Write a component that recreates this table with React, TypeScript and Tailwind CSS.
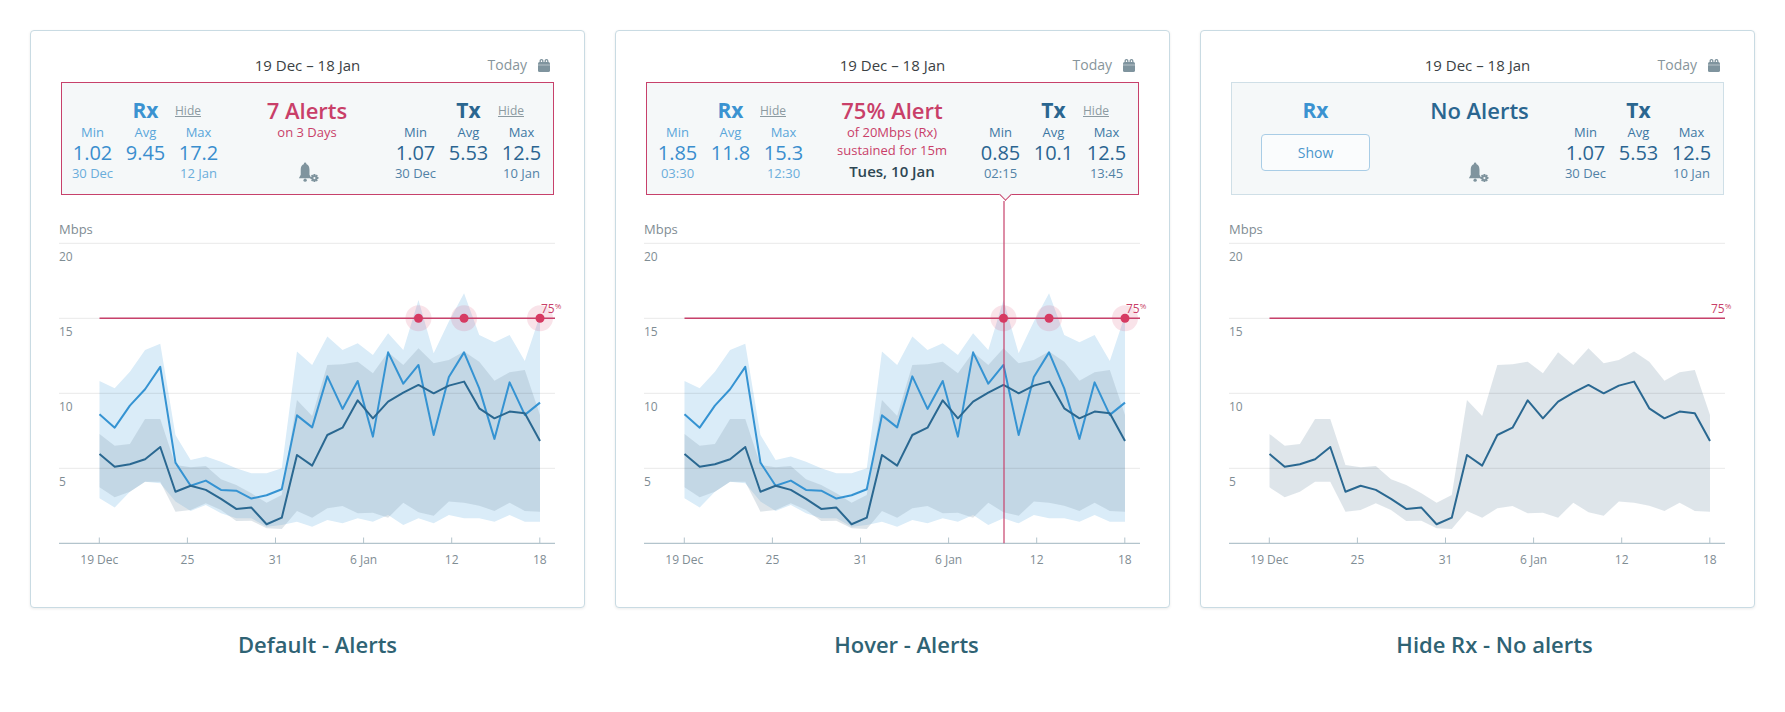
import React from "react";

const rxLine = [8.6, 7.71, 9.18, 10.27, 11.76, 5.38, 3.84, 4.18, 3.56, 3.51, 2.98, 3.2, 3.6, 8.53, 7.73, 11.13, 8.96, 10.82, 7.11, 12.73, 10.64, 11.89, 7.22, 11.09, 12.73, 10.33, 6.96, 10.73, 8.56, 9.38];
const txLine = [5.96, 5.11, 5.27, 5.6, 6.42, 3.44, 3.84, 3.56, 2.96, 2.29, 2.38, 1.27, 1.71, 5.89, 5.18, 7.22, 7.71, 9.53, 8.33, 9.44, 10.04, 10.56, 10.0, 10.51, 10.78, 9.0, 8.33, 8.78, 8.67, 6.82];
const rxMax = [10.82, 10.33, 11.44, 12.89, 13.31, 7.22, 5.56, 5.78, 5.44, 5.0, 4.67, 4.67, 5.0, 12.78, 11.89, 13.78, 12.89, 13.33, 12.56, 14.0, 12.89, 16.22, 12.67, 14.78, 16.67, 13.89, 13.4, 13.89, 12.16, 15.2];
const rxMin = [3.0, 2.38, 3.44, 4.11, 4.0, 2.78, 2.16, 2.56, 2.0, 1.67, 1.67, 1.11, 1.22, 1.44, 1.11, 1.56, 1.33, 1.67, 1.44, 1.89, 1.22, 1.67, 1.33, 1.89, 1.67, 1.67, 1.44, 1.89, 1.44, 1.44];
const txMax = [7.29, 6.51, 6.62, 8.29, 8.29, 5.22, 5.07, 5.16, 4.27, 3.89, 3.33, 2.71, 3.22, 9.56, 8.49, 11.89, 11.93, 12.11, 11.33, 12.73, 11.89, 13.0, 12.0, 12.22, 12.78, 12.11, 10.84, 11.4, 11.56, 8.56];
const txMin = [3.73, 3.07, 3.44, 4.11, 4.11, 2.11, 2.22, 2.67, 2.22, 1.49, 1.51, 1.0, 0.96, 2.16, 1.71, 2.33, 2.49, 2.0, 2.04, 1.71, 2.71, 2.07, 1.84, 2.78, 2.71, 2.51, 2.16, 2.71, 2.16, 2.11];

const X0 = 69.5;
const DX = 440.5 / 29;
const xi = (i: number) => X0 + i * DX;
const yv = (v: number) => 513.3 - v * 15;

const linePath = (d: number[]) =>
  d.map((v, i) => `${i === 0 ? "M" : "L"}${xi(i).toFixed(2)},${yv(v).toFixed(2)}`).join(" ");
const areaPath = (top: number[], bot: number[]) => {
  const a = top.map((v, i) => `${i === 0 ? "M" : "L"}${xi(i).toFixed(2)},${yv(v).toFixed(2)}`).join(" ");
  const b = bot
    .map((v, i) => ({ v, i }))
    .reverse()
    .map(({ v, i }) => `L${xi(i).toFixed(2)},${yv(v).toFixed(2)}`)
    .join(" ");
  return `${a} ${b} Z`;
};

const ticks = [
  { x: 69.3, t: "19 Dec" },
  { x: 157.4, t: "25" },
  { x: 245.5, t: "31" },
  { x: 333.6, t: "6 Jan" },
  { x: 421.7, t: "12" },
  { x: 509.8, t: "18" },
];

function Chart({ showRx, dots, hover }: { showRx: boolean; dots: boolean; hover: boolean }) {
  const grid = [20, 15, 10, 5];
  return (
    <svg width="553" height="412" viewBox="1 165 553 412" className="block">
      {showRx && <path d={areaPath(rxMax, rxMin)} fill="#daecf8" />}
      <path d={areaPath(txMax, txMin)} fill="#8aa3b5" fillOpacity={0.28} />
      <text x="29" y="203.5" fontSize="13" fill="#7f8d94">Mbps</text>
      {grid.map((g) => (
        <g key={g}>
          <line x1="29" x2="525" y1={yv(g)} y2={yv(g)} stroke="#000" strokeOpacity={0.09} strokeWidth="1" />
          <text x="29" y={yv(g) + 18} fontSize="12" fill="#7f8d94">{g}</text>
        </g>
      ))}
      <line x1="29" x2="525" y1="513.3" y2="513.3" stroke="#b3c4cc" strokeWidth="1.2" />
      {ticks.map((t) => (
        <g key={t.t}>
          <line x1={t.x} x2={t.x} y1="507.5" y2="513.3" stroke="#b3c4cc" strokeWidth="1" />
          <text x={t.x} y="533.5" fontSize="12" fill="#7f8d94" textAnchor="middle">{t.t}</text>
        </g>
      ))}
      <line x1={X0} x2="525" y1={yv(15)} y2={yv(15)} stroke="#c7416b" strokeWidth="1.5" />
      <text x="511" y="282.7" fontSize="12" fill="#c93f69">
        75<tspan fontSize="8" dy="-4">%</tspan>
      </text>
      {showRx && (
        <path d={linePath(rxLine)} fill="none" stroke="#3593d2" strokeWidth="2" strokeLinejoin="round" />
      )}
      <path d={linePath(txLine)} fill="none" stroke="#2a6891" strokeWidth="2" strokeLinejoin="round" />
      {hover && <line x1="389" x2="389" y1="171" y2="513.3" stroke="#c7416b" strokeWidth="1.2" />}
      {dots &&
        [21, 24, 29].map((i) => (
          <g key={i}>
            <circle cx={xi(i)} cy={yv(15)} r="13" fill="#d6406a" fillOpacity={0.15} />
            <circle cx={xi(i)} cy={yv(15)} r="4.5" fill="#d63a62" />
          </g>
        ))}
    </svg>
  );
}

function CalendarIcon() {
  return (
    <svg width="12" height="13" viewBox="0 0 12 13">
      <rect x="0" y="3" width="12" height="10" rx="1.6" fill="#7f949e" />
      <rect x="2.2" y="0.7" width="2.6" height="3.6" rx="1.2" fill="none" stroke="#7f949e" strokeWidth="1.3" />
      <rect x="7.2" y="0.7" width="2.6" height="3.6" rx="1.2" fill="none" stroke="#7f949e" strokeWidth="1.3" />
      <rect x="0" y="5.6" width="12" height="0.8" fill="#ffffff" fillOpacity={0.55} />
    </svg>
  );
}

function BellIcon() {
  return (
    <svg width="23" height="22" viewBox="0 0 21 20">
      <circle cx="6.5" cy="1.6" r="1.1" fill="#7f949e" />
      <path d="M6.5 1.8c-2.8 0-4 2.4-4 5.3v4.4L0.8 14.8h11.4l-1.7-3.3V7.1c0-2.9-1.2-5.3-4-5.3z" fill="#7f949e" />
      <circle cx="6.5" cy="16.6" r="1.5" fill="#7f949e" />
      <g transform="translate(15 14.6)">
        {[0, 45, 90, 135].map((a) => (
          <rect key={a} x="-0.9" y="-3.7" width="1.8" height="7.4" rx="0.4" fill="#7f949e" transform={`rotate(${a})`} />
        ))}
        <circle r="2.6" fill="#7f949e" />
        <circle r="1" fill="#f5f8f9" />
      </g>
    </svg>
  );
}

type Scheme = { title: string; label: string; value: string; sub: string };
const RX: Scheme = {
  title: "text-[#3b93d1]",
  label: "text-[#5aa6da]",
  value: "text-[#3a8ece]",
  sub: "text-[#6aaddb]",
};
const TX: Scheme = {
  title: "text-[#2a6690]",
  label: "text-[#3c77a3]",
  value: "text-[#2b6591]",
  sub: "text-[#5282a6]",
};

function Stats({
  name,
  c,
  hide,
  values,
  subs,
  children,
}: {
  name: string;
  c: Scheme;
  hide?: boolean;
  values?: string[];
  subs?: string[];
  children?: React.ReactNode;
}) {
  return (
    <div className="w-[159px] shrink-0">
      <div className="grid grid-cols-3 h-[26px]">
        <div />
        <div className={`text-center text-[21px] font-bold leading-[26px] ${c.title}`}>{name}</div>
        <div className="pl-[3px] text-[12px] leading-[28px] text-[#8c9aa1] underline">{hide ? "Hide" : ""}</div>
      </div>
      {values && subs && (
        <>
          <div className={`grid grid-cols-3 h-[19px] text-center text-[13px] leading-[19px] ${c.label}`}>
            <div>Min</div>
            <div>Avg</div>
            <div>Max</div>
          </div>
          <div className={`grid grid-cols-3 h-[22px] text-center text-[20px] leading-[22px] ${c.value}`}>
            {values.map((v, i) => (
              <div key={i}>{v}</div>
            ))}
          </div>
          <div className={`grid grid-cols-3 h-[18px] text-center text-[13px] leading-[18px] ${c.sub}`}>
            {subs.map((v, i) => (
              <div key={i}>{v}</div>
            ))}
          </div>
        </>
      )}
      {children}
    </div>
  );
}

function Card({ variant }: { variant: 1 | 2 | 3 }) {
  const alert = variant !== 3;
  const captionPad = variant === 1 ? "pl-[20px]" : variant === 2 ? "pl-[28px]" : "pl-[34px]";
  return (
    <div>
      <div className="w-[555px] h-[578px] border border-[#c9dbe3] rounded-[4px] bg-white shadow-[0_1px_3px_rgba(0,0,0,0.08)]">
        <div className="mt-[23px] h-[22px] grid grid-cols-[1fr_auto_1fr] items-center">
          <div />
          <div className="text-[15px] leading-[22px] text-[#3b4144]">19 Dec – 18 Jan</div>
          <div className="flex items-center justify-end pr-[34px] gap-[11px]">
            <span className="text-[14px] leading-[22px] text-[#87959b]">Today</span>
            <CalendarIcon />
          </div>
        </div>
        <div
          className={`relative mx-[30px] mt-[6px] h-[113px] border flex pt-[14px] pl-[4px] pr-[5px] bg-[#f5f8f9] ${
            alert ? "border-[#c7416b]" : "border-[#cfdfe7]"
          }`}
        >
          {variant === 1 && (
            <Stats name="Rx" c={RX} hide values={["1.02", "9.45", "17.2"]} subs={["30 Dec", "", "12 Jan"]} />
          )}
          {variant === 2 && (
            <Stats name="Rx" c={RX} hide values={["1.85", "11.8", "15.3"]} subs={["03:30", "", "12:30"]} />
          )}
          {variant === 3 && (
            <Stats name="Rx" c={RX}>
              <div className="mt-[11px] mx-auto w-[109px] h-[37px] rounded-[4px] border border-[#a9cde6] bg-[#fafcfd] flex items-center justify-center text-[14px] text-[#4a96cc]">
                Show
              </div>
            </Stats>
          )}
          <div className="flex-1 flex flex-col items-center">
            {variant === 1 && (
              <>
                <div className="h-[26px] text-[22px] font-semibold leading-[26px] text-[#c93f69]">7 Alerts</div>
                <div className="h-[18px] text-[13px] leading-[18px] text-[#c93f69]">on 3 Days</div>
                <div className="h-[43px] flex items-end pl-[4px]">
                  <BellIcon />
                </div>
              </>
            )}
            {variant === 2 && (
              <>
                <div className="h-[26px] text-[22px] font-semibold leading-[26px] text-[#c93f69]">75% Alert</div>
                <div className="h-[18px] text-[13px] leading-[18px] text-[#c93f69]">of 20Mbps (Rx)</div>
                <div className="h-[18px] text-[13px] leading-[18px] text-[#c93f69]">sustained for 15m</div>
                <div className="h-[24px] text-[15px] font-semibold leading-[24px] text-[#2e4753]">Tues, 10 Jan</div>
              </>
            )}
            {variant === 3 && (
              <div className="flex flex-col items-center pl-[5px]">
                <div className="h-[26px] text-[22px] font-semibold leading-[26px] text-[#2a6690]">No Alerts</div>
                <div className="h-[61px] flex items-end">
                  <BellIcon />
                </div>
              </div>
            )}
          </div>
          {variant === 1 && (
            <Stats name="Tx" c={TX} hide values={["1.07", "5.53", "12.5"]} subs={["30 Dec", "", "10 Jan"]} />
          )}
          {variant === 2 && (
            <Stats name="Tx" c={TX} hide values={["0.85", "10.1", "12.5"]} subs={["02:15", "", "13:45"]} />
          )}
          {variant === 3 && (
            <Stats name="Tx" c={TX} values={["1.07", "5.53", "12.5"]} subs={["30 Dec", "", "10 Jan"]} />
          )}
          {variant === 2 && (
            <div className="absolute left-[353.5px] bottom-[-5px] w-[9px] h-[9px] rotate-45 bg-[#f5f8f9] border-r border-b border-[#c7416b]" />
          )}
        </div>
        <Chart showRx={variant !== 3} dots={variant !== 3} hover={variant === 2} />
      </div>
      <div className={`mt-[21px] text-center text-[22px] font-semibold leading-[30px] text-[#2f6374] ${captionPad}`}>
        {variant === 1 ? "Default - Alerts" : variant === 2 ? "Hover - Alerts" : "Hide Rx - No alerts"}
      </div>
    </div>
  );
}

export default function App() {
  return (
    <div className="w-[1785px] h-[712px] bg-white flex gap-[30px] px-[30px] pt-[30px] font-['Open_Sans',sans-serif]">
      <Card variant={1} />
      <Card variant={2} />
      <Card variant={3} />
    </div>
  );
}
